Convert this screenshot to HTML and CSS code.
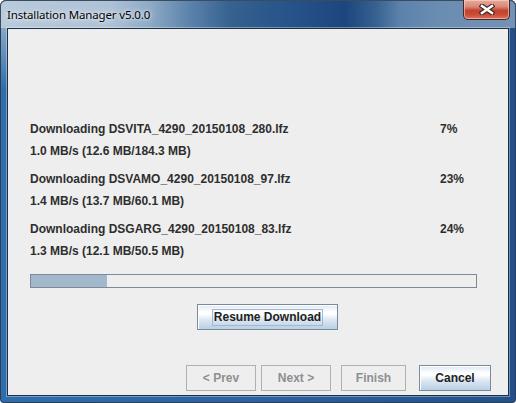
FILE: index.html
```html
<!DOCTYPE html>
<html>
<head>
<meta charset="utf-8">
<title>Installation Manager v5.0.0</title>
<link rel="stylesheet" href="styles.css">
</head>
<body>
<div class="window">
  <div class="titlebar">
    <span class="title">Installation Manager v5.0.0</span>
    <div class="close">
      <svg width="16" height="11" viewBox="0 0 16 11">
        <path d="M3 2 L13 9 M13 2 L3 9" stroke="#3a2222" stroke-width="4.6" stroke-linecap="square" fill="none"/>
        <path d="M3 2 L13 9 M13 2 L3 9" stroke="#ffffff" stroke-width="2.6" stroke-linecap="square" fill="none"/>
      </svg>
    </div>
  </div>
  <div class="client">
    <div class="content">
      <div class="rows">
        <div class="item">
          <div class="line"><span class="name">Downloading DSVITA_4290_20150108_280.lfz</span><span class="pct">7%</span></div>
          <div class="line">1.0 MB/s (12.6 MB/184.3 MB)</div>
        </div>
        <div class="item">
          <div class="line"><span class="name">Downloading DSVAMO_4290_20150108_97.lfz</span><span class="pct">23%</span></div>
          <div class="line">1.4 MB/s (13.7 MB/60.1 MB)</div>
        </div>
        <div class="item">
          <div class="line"><span class="name">Downloading DSGARG_4290_20150108_83.lfz</span><span class="pct">24%</span></div>
          <div class="line">1.3 MB/s (12.1 MB/50.5 MB)</div>
        </div>
      </div>
      <div class="progress"><div class="fill" style="width:17%"></div></div>
      <div class="resume-row">
        <button class="btn active resume"><span class="focus">Resume Download</span></button>
      </div>
    </div>
    <div class="footer">
      <button class="btn disabled prev">&lt; Prev</button>
      <button class="btn disabled next">Next &gt;</button>
      <button class="btn disabled finish">Finish</button>
      <button class="btn active cancel">Cancel</button>
    </div>
  </div>
</div>
</body>
</html>
```

FILE: styles.css
```css
html, body {
  margin: 0;
  padding: 0;
  background: #ffffff;
}

.window {
  box-sizing: border-box;
  width: 516px;
  height: 403px;
  display: flex;
  flex-direction: column;
  padding: 0 7px 7px 7px;
  border-radius: 6px 6px 4px 4px;
  background:
    linear-gradient(to bottom, rgba(185,204,222,0.9) 0px, rgba(185,204,222,0.5) 40px, rgba(185,204,222,0) 90px) left top / 8px 100% no-repeat,
    linear-gradient(to right, #2f6dac 0%, #2b62a0 50%, #23508a 100%);
  box-shadow: inset 0 0 0 1px #2c3e52;
}

.titlebar {
  height: 28px;
  margin: 0 -7px;
  padding: 0 7px;
  display: flex;
  align-items: flex-start;
  justify-content: space-between;
  border-radius: 6px 6px 0 0;
  background: linear-gradient(to right,
    #b9cadb 0px, #aec2d6 110px, #8eaac6 150px, #5b82ab 190px, #35628f 230px,
    #26538a 290px, #1c477e 345px, #35608f 375px, #5c82ab 400px, #6b8db2 440px, #7392b5 516px);
  box-shadow: inset 0 1px 0 #3a4c60, inset 1px 0 0 #3a4c60, inset -1px 0 0 #3a4c60;
}

.title {
  font-family: "Noto Sans", "Open Sans", sans-serif;
  font-size: 11.5px;
  letter-spacing: -0.15px;
  line-height: 30px;
  color: #000;
  text-shadow: 0 0 6px rgba(255,255,255,0.9), 0 0 3px rgba(255,255,255,0.8);
}

.close {
  width: 47px;
  height: 20px;
  box-sizing: border-box;
  margin-right: -1px;
  border: 1px solid #4a2624;
  border-top: none;
  border-radius: 0 0 5px 5px;
  background: linear-gradient(to bottom, #e8aa9c 0%, #d98a76 35%, #c2432f 55%, #c84a34 75%, #d9745c 100%);
  box-shadow: inset 0 0 0 1px rgba(255,220,210,0.55);
  display: flex;
  align-items: center;
  justify-content: center;
}

.close svg {
  display: block;
}

.client {
  flex: 1;
  display: flex;
  flex-direction: column;
  background: #eeeeee;
  border: 1px solid #1d2f45;
  box-shadow: 0 0 0 1px rgba(255,255,255,0.35);
}

.content {
  padding: 89px 0 0 22px;
  font-family: "Liberation Sans", Arial, sans-serif;
  font-weight: bold;
  font-size: 12px;
  color: #2e2e2e;
}

.rows {
  display: flex;
  flex-direction: column;
  gap: 6px;
}

.line {
  display: grid;
  grid-template-columns: 410px auto;
  line-height: 22px;
  height: 22px;
}

.progress {
  box-sizing: border-box;
  margin-top: 12px;
  width: 447px;
  height: 14px;
  border: 1px solid #7a8a99;
  background: #eeeeee;
  display: flex;
}

.fill {
  background: #a3b8cc;
  height: 100%;
}

.resume-row {
  display: flex;
  margin-top: 16px;
  padding-left: 167px;
}

.btn {
  box-sizing: border-box;
  height: 26px;
  padding: 0;
  margin: 0;
  font-family: "Liberation Sans", Arial, sans-serif;
  font-weight: bold;
  font-size: 12px;
  display: flex;
  align-items: center;
  justify-content: center;
}

.active {
  color: #222222;
  border: 1px solid #7a8a99;
  background: linear-gradient(to bottom, #dde8f3 0%, #ffffff 30%, #ffffff 38%, #dde8f3 60%, #b8cfe5 100%);
  box-shadow: inset 1px 1px 0 #ffffff;
}

.disabled {
  color: #8e8f91;
  border: 1px solid #b0b0b0;
  background: #eeeeee;
}

.resume {
  width: 141px;
}

.focus {
  border: 1px solid #a3b8cc;
  padding: 0 1px;
  line-height: 15px;
}

.footer {
  margin-top: auto;
  display: flex;
  justify-content: flex-end;
  padding: 0 17px 4px 0;
}

.prev { width: 70px; }
.next { width: 70px; margin-left: 5px; }
.finish { width: 65px; margin-left: 10px; }
.cancel { width: 72px; margin-left: 13px; }
```
